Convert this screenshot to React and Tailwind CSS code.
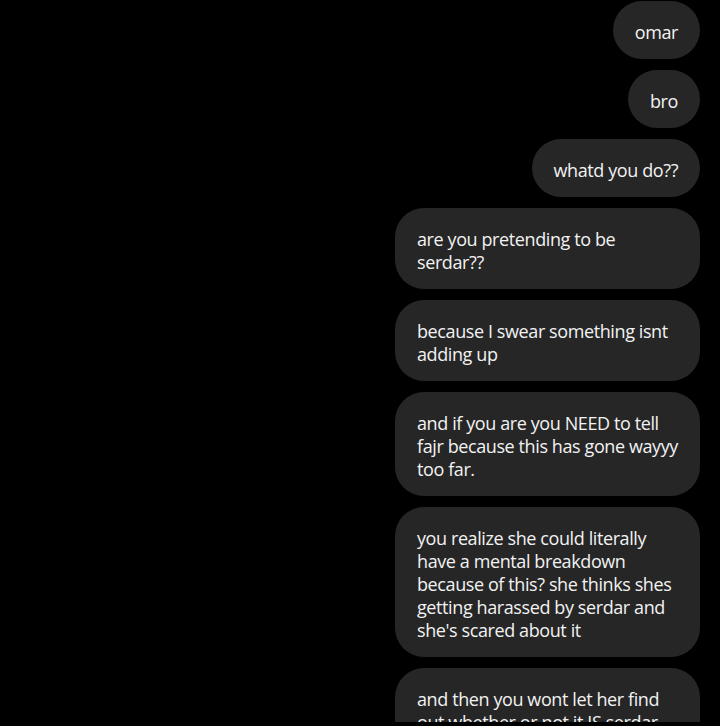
const messages = [
  ["omar"],
  ["bro"],
  ["whatd you do??"],
  ["are you pretending to be", "serdar??"],
  ["because I swear something isnt", "adding up"],
  ["and if you are you NEED to tell", "fajr because this has gone wayyy", "too far."],
  [
    "you realize she could literally",
    "have a mental breakdown",
    "because of this? she thinks shes",
    "getting harassed by serdar and",
    "she's scared about it",
  ],
  ["and then you wont let her find", "out whether or not it IS serdar", "or not"],
];

const Bubble = ({ lines }) => {
  const multi = lines.length > 1;
  return (
    <div
      className={`bg-[#262626] text-[#f2f2f2] rounded-[29px] px-[22px] pt-[20px] pb-[15px] text-[18px] leading-[23px] tracking-[-0.4px] ${
        multi ? "w-[305px]" : ""
      }`}
    >
      {lines.map((line) => (
        <div key={line} className="whitespace-nowrap">
          {line}
        </div>
      ))}
    </div>
  );
};

export default function App() {
  return (
    <div
      className="h-[726px] w-[720px] bg-black"
      style={{ fontFamily: '"Segoe UI", "Open Sans", sans-serif' }}
    >
      <div className="h-[722px] overflow-hidden pt-px pr-[20px]">
        <div className="flex flex-col items-end gap-[11px]">
          {messages.map((lines, i) => (
            <Bubble key={i} lines={lines} />
          ))}
        </div>
      </div>
    </div>
  );
}
